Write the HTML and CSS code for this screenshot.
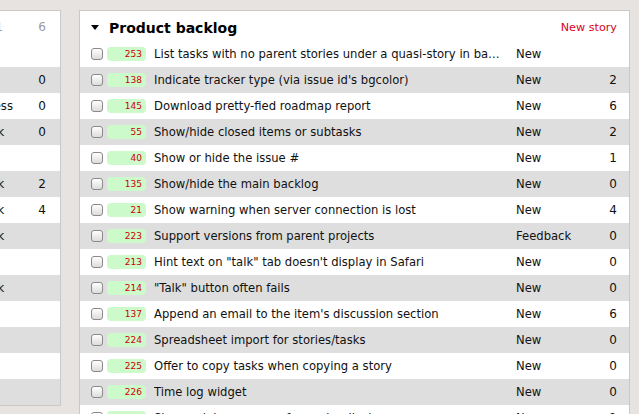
FILE: index.html
```html
<!DOCTYPE html>
<html>
<head>
<meta charset="utf-8">
<link rel="stylesheet" href="styles.css">
</head>
<body>
<div class="page">
  <div class="panel side">
    <div class="side-head"><span class="sh-title">Sprint 12</span><span class="sh-count">1</span><span class="sh-pts">6</span></div>
    <div class="srow"><span class="s-title"></span><span class="s-status"></span><span class="s-pts"></span></div>
    <div class="srow alt"><span class="s-title">Hide closed tasks</span><span class="s-status"></span><span class="s-pts">0</span></div>
    <div class="srow"><span class="s-title">Burndown chart</span><span class="s-status">In Progress</span><span class="s-pts">0</span></div>
    <div class="srow alt"><span class="s-title">Task board view</span><span class="s-status">Feedback</span><span class="s-pts">0</span></div>
    <div class="srow"><span class="s-title"></span><span class="s-status"></span><span class="s-pts"></span></div>
    <div class="srow alt"><span class="s-title">Drag and drop</span><span class="s-status">Feedback</span><span class="s-pts">2</span></div>
    <div class="srow"><span class="s-title">Release notes</span><span class="s-status">Feedback</span><span class="s-pts">4</span></div>
    <div class="srow alt"><span class="s-title">Impediments</span><span class="s-status">Feedback</span><span class="s-pts"></span></div>
    <div class="srow"><span class="s-title"></span><span class="s-status"></span><span class="s-pts"></span></div>
    <div class="srow alt"><span class="s-title">Card printing</span><span class="s-status">Feedback</span><span class="s-pts"></span></div>
    <div class="srow"><span class="s-title"></span><span class="s-status"></span><span class="s-pts"></span></div>
    <div class="srow alt"><span class="s-title"></span><span class="s-status"></span><span class="s-pts"></span></div>
    <div class="srow"><span class="s-title"></span><span class="s-status"></span><span class="s-pts"></span></div>
    <div class="srow alt"><span class="s-title"></span><span class="s-status"></span><span class="s-pts"></span></div>
  </div>

  <div class="panel main">
    <div class="head">
      <span class="toggle"><span class="tri"></span></span>
      <span class="head-title">Product backlog</span>
      <span class="new-story">New story</span>
    </div>
    <div class="row"><span class="cb"></span><span class="id">253</span><span class="title">List tasks with no parent stories under a quasi-story in backlog</span><span class="status">New</span><span class="pts"></span></div>
    <div class="row alt"><span class="cb"></span><span class="id">138</span><span class="title">Indicate tracker type (via issue id's bgcolor)</span><span class="status">New</span><span class="pts">2</span></div>
    <div class="row"><span class="cb"></span><span class="id">145</span><span class="title">Download pretty-fied roadmap report</span><span class="status">New</span><span class="pts">6</span></div>
    <div class="row alt"><span class="cb"></span><span class="id">55</span><span class="title">Show/hide closed items or subtasks</span><span class="status">New</span><span class="pts">2</span></div>
    <div class="row"><span class="cb"></span><span class="id">40</span><span class="title">Show or hide the issue #</span><span class="status">New</span><span class="pts">1</span></div>
    <div class="row alt"><span class="cb"></span><span class="id">135</span><span class="title">Show/hide the main backlog</span><span class="status">New</span><span class="pts">0</span></div>
    <div class="row"><span class="cb"></span><span class="id">21</span><span class="title">Show warning when server connection is lost</span><span class="status">New</span><span class="pts">4</span></div>
    <div class="row alt"><span class="cb"></span><span class="id">223</span><span class="title">Support versions from parent projects</span><span class="status">Feedback</span><span class="pts">0</span></div>
    <div class="row"><span class="cb"></span><span class="id">213</span><span class="title">Hint text on "talk" tab doesn't display in Safari</span><span class="status">New</span><span class="pts">0</span></div>
    <div class="row alt"><span class="cb"></span><span class="id">214</span><span class="title">"Talk" button often fails</span><span class="status">New</span><span class="pts">0</span></div>
    <div class="row"><span class="cb"></span><span class="id">137</span><span class="title">Append an email to the item's discussion section</span><span class="status">New</span><span class="pts">6</span></div>
    <div class="row alt"><span class="cb"></span><span class="id">224</span><span class="title">Spreadsheet import for stories/tasks</span><span class="status">New</span><span class="pts">0</span></div>
    <div class="row"><span class="cb"></span><span class="id">225</span><span class="title">Offer to copy tasks when copying a story</span><span class="status">New</span><span class="pts">0</span></div>
    <div class="row alt"><span class="cb"></span><span class="id">226</span><span class="title">Time log widget</span><span class="status">New</span><span class="pts">0</span></div>
    <div class="row"><span class="cb"></span><span class="id">227</span><span class="title">Story points summary for each milestone</span><span class="status">New</span><span class="pts">1</span></div>
  </div>
</div>
</body>
</html>
```

FILE: styles.css
```css
html, body {
  margin: 0;
  padding: 0;
  height: 100%;
  overflow: hidden;
}
body {
  background: #e7e3e0;
  font-family: "DejaVu Sans", Verdana, sans-serif;
  font-size: 12px;
  color: #111;
}
.page {
  display: flex;
  align-items: flex-start;
  padding-top: 10px;
}
.panel {
  background: #fff;
  border: 1px solid #c9c9c9;
  flex: none;
  overflow: hidden;
}
.side {
  width: 198px;
  margin-left: -139px;
}
.main {
  width: 549px;
  margin-left: 18px;
  height: 420px;
}

/* side panel */
.side-head {
  height: 30px;
  display: flex;
  align-items: center;
  padding: 2px 14px 0 11px;
  box-sizing: border-box;
  color: #999;
}
.sh-title {
  width: 76px;
  overflow: hidden;
  white-space: nowrap;
}
.sh-count {
  width: 54px;
  padding-right: 29px;
  text-align: right;
}
.sh-pts {
  width: 14px;
  text-align: right;
}
.srow {
  height: 26px;
  display: flex;
  align-items: center;
  padding: 0 14px 0 11px;
  white-space: nowrap;
}
.srow.alt, .row.alt {
  background: #dedede;
}
.s-title {
  width: 76px;
  overflow: hidden;
}
.s-status {
  width: 83px;
  overflow: hidden;
  font-size: 11.6px;
}
.s-pts {
  width: 14px;
  text-align: right;
}

/* main panel */
.head {
  height: 30px;
  display: flex;
  align-items: center;
  padding: 3px 12px 0 7px;
  box-sizing: border-box;
}
.toggle {
  width: 16px;
  height: 16px;
  display: flex;
  align-items: center;
  justify-content: center;
  background: #fff;
}
.tri {
  width: 0;
  height: 0;
  border-left: 4px solid transparent;
  border-right: 4px solid transparent;
  border-top: 5px solid #000;
}
.head-title {
  margin-left: 6px;
  font-weight: bold;
  font-size: 14px;
  color: #000;
}
.new-story {
  margin-left: auto;
  color: #dd0022;
  font-size: 11.2px;
}
.row {
  height: 26px;
  display: flex;
  align-items: center;
  padding: 0 12px 0 11px;
  white-space: nowrap;
}
.cb {
  width: 12px;
  height: 12px;
  box-sizing: border-box;
  border: 1px solid #8a8a8a;
  border-radius: 3px;
  background: linear-gradient(#ffffff, #dcdcdc);
  margin-right: 4px;
  flex: none;
}
.id {
  width: 39px;
  height: 14px;
  line-height: 14px;
  box-sizing: border-box;
  padding-right: 4px;
  background: #ccfacb;
  border-radius: 4px;
  color: #cc0000;
  font-size: 9px;
  text-align: right;
  margin-right: 8px;
  flex: none;
}
.title {
  width: 350px;
  margin-right: 12px;
  overflow: hidden;
  text-overflow: ellipsis;
  font-size: 11.6px;
  flex: none;
}
.status {
  width: 60px;
  font-size: 11.6px;
  flex: none;
}
.pts {
  width: 41px;
  text-align: right;
  flex: none;
}
```
